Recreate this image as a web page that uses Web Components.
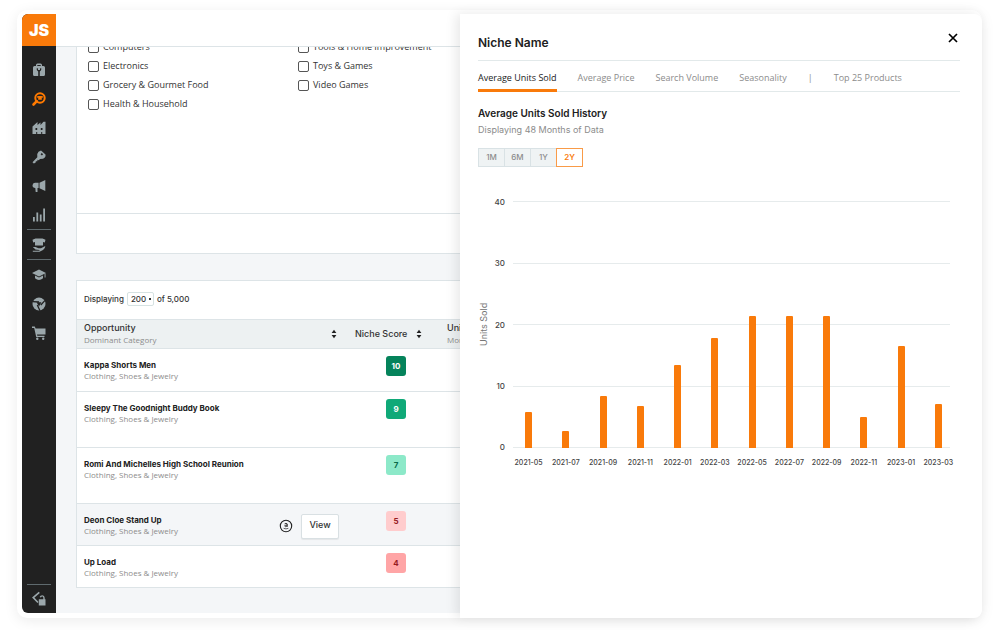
<!DOCTYPE html>
<html lang="en">
<head>
<meta charset="utf-8">
<title>Niche research</title>
<style>
  html { height: 100%; }
  body {
    margin: 0;
    min-height: 100%;
    display: flex;
    background: #fff;
    font: 500 9px/12px Inter, "Open Sans", sans-serif;
    color: #333;
  }
</style>
</head>
<body>
<research-app></research-app>

<script>
const define = (name, html, setup) => {
  const template = document.createElement('template');
  template.innerHTML = `<style>
    *, *::before, *::after { box-sizing: border-box; }
    button, input, select { font: inherit; color: inherit; margin: 0; }
    button { cursor: pointer; }
  </style>` + html;
  customElements.define(name, class extends HTMLElement {
    constructor() {
      super();
      this.attachShadow({ mode: 'open' }).append(template.content.cloneNode(true));
    }
    connectedCallback() {
      if (setup && !this.ready) { this.ready = true; setup(this, this.shadowRoot); }
    }
  });
};

/* ---------- icons ---------- */
const ICONS = {
  toolbox: '<path fill-rule="evenodd" d="M4 3V2Q4 .5 5.500 .5H8.500Q10 .5 10 2V3H11.500Q13 3 13 4.500V11.500Q13 13 11.500 13H2.500Q1 13 1 11.500V4.500Q1 3 2.500 3ZM5.300 3H8.700V2H5.300ZM4.600 5.500Q4.500 7.600 6.200 8.500V13H7.800V8.500Q9.500 7.600 9.400 5.500L8 5.200V7H6V5.200Z"/>',
  search: '<circle cx="8" cy="6" r="4.700" fill="none" stroke="currentColor" stroke-width="2"/><path d="M4.800 9.200 1.500 12.500" stroke="currentColor" stroke-width="2.600" stroke-linecap="round"/><path d="M4.800 4.600 6.500 4H9.500L11.200 4.600 10.800 5.800 9.800 5.600V7.800H6.200V5.600L5.200 5.800Z"/>',
  rank: '<path fill-rule="evenodd" d="M.5 5.500 5.500 1V4L8.500 1.500V4L11.500 .8H13.500V13H.5ZM3.500 7V9H5.200V7ZM8.800 7V9H10.500V7ZM4.200 11V13H5.200V11ZM9.200 11V13H10.200V11Z"/>',
  key: '<path fill-rule="evenodd" d="M9 .5 13.500 4.500Q14 7.500 11 8.800L8 9 6.800 10.200 5.500 9.800 5.300 11.300 3.900 11.300 3.500 12.800 1.800 13.500.5 12.300 5.300 7.200Q4.600 3.500 6.500 1.700ZM9.800 3 8.600 4.200 9.900 5.500 11.100 4.300Z"/>',
  megaphone: '<path d="M13.300 1V12L7.500 9.300V3.700ZM6.600 3.800V9H5.500V13H3.700L3.300 9Q.5 8.800.5 6.400T3 3.800Z"/>',
  chart: '<path d="M1 9H2.800V13.500H1ZM4.400 4.500H6.200V13.500H4.400ZM7.800 6.500H9.600V13.500H7.800ZM11.200 .5H13V13.500H11.200Z"/>',
  source: '<path d="M3.500 .5H10.500L13.500 1.800 12.800 4.500 11 4V7.500H3V4L1.200 4.500.5 1.800Z"/><path d="M.8 9H3.500L6.500 10.300H9L13.300 8Q13.500 10 11 12L7.500 13.700H.8V12.700H7.500V11.900L3.500 11.500Z"/>',
  academy: '<path d="M7 1.500 14 5 7 8.500 0 5ZM3 7.400 7 9.400 11 7.400V10.200Q7 13.600 3 10.200ZM12.600 6 13.500 5.600V9.500H12.600Z"/>',
  circle: '<circle cx="7" cy="7" r="6.500"/><g stroke="#212121" stroke-width="1.300"><path d="M7 5 .5 4.600M8.800 8 12.800 3.600M5.300 8 8 13.800"/></g><path d="M4.600 5.300H9.400L7 9.600Z" fill="#212121"/>',
  cart: '<path d="M0 .5H2.800L3.600 2.500H13.500V8.500H5L5.300 9.800H12.500V11H4.200L2.200 1.900H0Z"/><circle cx="5.300" cy="12.700" r="1.200"/><circle cx="11.200" cy="12.700" r="1.200"/>',
  unlock: '<path d="M7.300 .3 1.200 5.600 6 10.500" fill="none" stroke="currentColor" stroke-width="1.600"/><path d="M6.800 7.300H13.500V13.500H6.800Z"/><path d="M8.300 5.300Q8.700 3.900 10.300 3.900T12 5.800V8" fill="none" stroke="currentColor" stroke-width="1.400"/>',
  close: '<path d="M3 3 11 11M11 3 3 11" stroke="currentColor" stroke-width="1.700"/>',
  sort: '<path d="M7 2 9.800 5.800H4.200ZM7 12 4.200 8.200H9.800Z"/>',
  amazon: '<circle cx="7" cy="7" r="5.700" fill="none" stroke="currentColor" stroke-width="1.100"/><path d="M5.600 4.900Q7 3.700 8.200 4.900V7.900M8.200 6Q5.600 5.900 5.700 7.100T8.200 6.900" fill="none" stroke="currentColor" stroke-width=".9"/><path d="M4.600 9.300Q7 10.500 9.400 9.300" fill="none" stroke="currentColor" stroke-width=".7"/>'
};
define('app-icon', `<style>
  :host { display: block; width: 14px; height: 14px; flex: none; }
  svg { display: block; width: 100%; height: 100%; overflow: visible; }
</style><svg viewBox="0 0 14 14" fill="currentColor" aria-hidden="true"></svg>`,
(el, root) => { root.querySelector('svg').innerHTML = ICONS[el.getAttribute('name')]; });

/* ---------- sidebar ---------- */
define('side-bar', `<style>
  :host { display: flex; flex-direction: column; width: 34px; background: #212121; color: #9ba7ab;
    border-radius: 6px 0 0 6px; overflow: hidden; }
  .logo { display: grid; place-items: center; height: 32px; background: #f97a0a; color: #fff;
    font: 900 16px/20px Inter, sans-serif; text-decoration: none; }
  nav { flex: 1; display: flex; flex-direction: column; align-items: stretch; padding: 9px 5px 0; }
  nav a { display: grid; place-items: center; height: 29px; color: inherit; }
  nav a[aria-current] { color: #ff7a00; }
  nav .ruled { border: solid #5f6a6e; border-width: 1px 0; height: 31px; }
  nav .last { margin-top: auto; border-top: 1px solid #5f6a6e; }
</style>
<a class="logo" href="#home">JS</a>
<nav aria-label="Main">
  <a href="#tools" aria-label="Tools"><app-icon name="toolbox"></app-icon></a>
  <a href="#opportunities" aria-label="Opportunity finder" aria-current="page"><app-icon name="search"></app-icon></a>
  <a href="#rank" aria-label="Products"><app-icon name="rank"></app-icon></a>
  <a href="#keywords" aria-label="Keywords"><app-icon name="key"></app-icon></a>
  <a href="#promotions" aria-label="Promotions"><app-icon name="megaphone"></app-icon></a>
  <a href="#sales" aria-label="Sales"><app-icon name="chart"></app-icon></a>
  <a class="ruled" href="#suppliers" aria-label="Suppliers"><app-icon name="source"></app-icon></a>
  <a href="#academy" aria-label="Academy"><app-icon name="academy"></app-icon></a>
  <a href="#extension" aria-label="Extension"><app-icon name="circle"></app-icon></a>
  <a href="#market" aria-label="Market"><app-icon name="cart"></app-icon></a>
  <a class="last" href="#collapse" aria-label="Unlock menu"><app-icon name="unlock"></app-icon></a>
</nav>`);

/* ---------- category filters ---------- */
define('check-option', `<style>
  :host { display: block; }
  label { display: flex; align-items: center; gap: 4px; height: 18px; white-space: nowrap; font-family: "Open Sans", Inter, sans-serif; font-weight: 500; }
  input { appearance: none; width: 11px; height: 11px; border: 1px solid #555; border-radius: 2px; background: #fff; }
  input:checked { background: #f97a0a; }
</style><label><input type="checkbox"><span><slot></slot></span></label>`);

define('category-filters', `<style>
  :host { display: flex; flex-direction: column; background: #fff; border: solid #dde4e7; border-width: 0 0 1px 1px; }
  .options { display: grid; grid-template-columns: 210px auto; justify-content: start; align-content: end;
    height: 66px; padding-left: 11px; overflow: hidden; }
  .options div { display: grid; row-gap: 1px; align-content: start; }
  footer { margin-top: auto; height: 40px; border-top: 1px solid #dde4e7; }
</style>
<div class="options">
  <div><check-option>Computers</check-option><check-option>Electronics</check-option><check-option>Grocery &amp; Gourmet Food</check-option><check-option>Health &amp; Household</check-option></div>
  <div><check-option>Tools &amp; Home Improvement</check-option><check-option>Toys &amp; Games</check-option><check-option>Video Games</check-option></div>
</div>
<footer></footer>`);

/* ---------- results ---------- */
define('score-badge', `<style>
  :host { display: grid; place-items: center; width: 20px; height: 20px; border-radius: 3px; font-weight: 700; font-size: 8px; }
  :host([tone="best"]) { background: #05835b; color: #fff; }
  :host([tone="good"]) { background: #10a978; color: #fff; }
  :host([tone="fair"]) { background: #8de9c9; color: #0a6b4b; }
  :host([tone="poor"]) { background: #ffcccd; color: #961b1f; }
  :host([tone="bad"]) { background: #ffa5a6; color: #961b1f; }
</style><span><slot></slot></span>`);

define('result-table', `<style>
  :host { display: block; background: #fff; border: 1px solid #dde4e7; border-right: 0; overflow: hidden; }
  .bar { display: flex; align-items: center; gap: 3px; height: 38px; padding: 0 0 2px 7px; font-size: 8px; font-weight: 500; }
  select { appearance: none; height: 14px; width: 27px; padding: 0 0 0 3px; line-height: 12px; border: 1px solid #d6e2e2; border-radius: 2px;
    background: radial-gradient(circle at 22px 6px, #333 1px, transparent 1px) #fff; }
  table { width: 100%; min-width: 480px; border-collapse: collapse; table-layout: fixed; }
  th, td { padding: 0; text-align: left; font-weight: 500; vertical-align: top; }
  tr { border-top: 1px solid #dde4e7; }
  thead tr { background: #edf1f2; height: 29px; }
  th { vertical-align: middle; white-space: nowrap; }
  th div { display: flex; align-items: center; justify-content: space-between; }
  th.name div { padding: 0 4px 0 7px; }
  th.score div { padding: 0 12px 0 11px; }
  th.units div { padding-left: 10px; }
  app-icon { width: 12px; height: 12px; color: #212121; }
  small { display: block; font: 400 8px/11px "Open Sans", Inter, sans-serif; color: #8c8c8c; }
  strong { display: block; font-weight: 700; font-size: 8px; color: #212121; line-height: 12px; }
  td small { line-height: 10px; }
  td { height: 42px; }
  tbody tr:first-child td { height: 43px; }
  tr.tall td { height: 56px; }
  tr.hover { background: #f4f6f8; }
  .cell { display: flex; justify-content: space-between; align-items: flex-start; padding: 10px 5px 0 7px; }
  .cell div { white-space: nowrap; }
  .actions { display: flex; align-items: center; gap: 8px; }
  .actions app-icon { width: 14px; height: 14px; }
  .actions button { width: 38px; height: 25px; padding: 0 0 2px; background: #fff; border: 1px solid #d9e0e3; border-radius: 2px; box-shadow: 0 1px 1px #0001; }
  score-badge { margin: 7px 0 0 42px; }
</style>
<div class="bar"><label for="size">Displaying</label>
  <select id="size"><option>200</option><option>100</option></select><span>of 5,000</span></div>
<table>
  <colgroup><col style="width:267px"><col style="width:93px"><col></colgroup>
  <thead><tr>
    <th class="name"><div><span>Opportunity<small>Dominant Category</small></span><app-icon name="sort"></app-icon></div></th>
    <th class="score"><div><span>Niche Score</span><app-icon name="sort"></app-icon></div></th>
    <th class="units"><div><span>Units Sold<small>Monthly</small></span></div></th>
  </tr></thead>
  <tbody></tbody>
</table>`, (el, root) => {
  const rows = [
    ['Kappa Shorts Men', 10, 'best', ''],
    ['Sleepy The Goodnight Buddy Book', 9, 'good', 'tall'],
    ['Romi And Michelles High School Reunion', 7, 'fair', 'tall'],
    ['Deon Cloe Stand Up', 5, 'poor', 'hover'],
    ['Up Load', 4, 'bad', '']
  ];
  root.querySelector('tbody').innerHTML = rows.map(([name, score, tone, kind]) => `
    <tr class="${kind}"><td><div class="cell"><div><strong>${name}</strong><small>Clothing, Shoes &amp; Jewelry</small></div>
    ${kind === 'hover' ? '<div class="actions"><app-icon name="amazon"></app-icon><button type="button">View</button></div>' : ''}</div></td>
    <td><score-badge tone="${tone}">${score}</score-badge></td><td></td></tr>`).join('');
});

/* ---------- chart ---------- */
define('bar-chart', `<style>
  :host { display: grid; grid-template-columns: 11px 16px minmax(0, 1fr); column-gap: 0; }
  .axis { writing-mode: vertical-rl; transform: rotate(180deg); text-align: center; font-weight: 400; line-height: 11px; color: #777; }
  .ticks, .lines { display: flex; flex-direction: column; justify-content: space-between; }
  .ticks { margin: -5px 0; text-align: right; font-size: 8px; font-weight: 500; line-height: 12px; color: #444; }
  .plot { display: grid; height: 247px; padding-left: 5px; }
  .lines, .bars { grid-area: 1 / 1; }
  .lines { margin: 0 7px 0 3px; }
  .lines i { height: 1px; background: #e6ebec; }
  .bars, .dates { display: grid; grid-template-columns: repeat(12, minmax(0, 1fr)); justify-items: center; }
  .bars { align-items: end; }
  .bars i { width: 7px; background: #f97a0a; border-radius: 1px 1px 0 0; }
  .dates { grid-column: 3; padding: 9px 0 0 5px; font-size: 7px; font-weight: 500; color: #444; white-space: nowrap; }
</style>
<div class="axis">Units Sold</div>
<div class="ticks"><span>40</span><span>30</span><span>20</span><span>10</span><span>0</span></div>
<div class="plot"><div class="lines"><i></i><i></i><i></i><i></i><i></i></div><div class="bars"></div></div>
<div class="dates"></div>`, (el, root) => {
  const data = { '2021-05': 5.8, '2021-07': 2.8, '2021-09': 8.4, '2021-11': 6.8, '2022-01': 13.4, '2022-03': 17.8,
    '2022-05': 21.3, '2022-07': 21.3, '2022-09': 21.3, '2022-11': 5, '2023-01': 16.6, '2023-03': 7.2 };
  root.querySelector('.bars').innerHTML = Object.values(data).map(v => `<i style="height:${v / 40 * 100}%"></i>`).join('');
  root.querySelector('.dates').innerHTML = Object.keys(data).map(d => `<span>${d}</span>`).join('');
});

/* ---------- drawer ---------- */
define('niche-drawer', `<style>
  :host { display: block; background: #fff; padding: 1px 22px 0 18px; box-shadow: -4px 0 12px #00000017; border-radius: 0 8px 8px 0; position: relative; }
  header { display: flex; justify-content: space-between; align-items: center; height: 46px; padding-top: 10px; border-bottom: 1px solid #e2e9ea; }
  h2, h3, p { margin: 0; }
  h2 { font-size: 12px; line-height: 16px; font-weight: 600; color: #212121; }
  header button { padding: 0; border: 0; background: none; color: #000; margin-bottom: 10px; }
  .tabs { display: flex; gap: 21px; height: 31px; align-items: stretch; border-bottom: 1px solid #e2e9ea; color: #8c8c8c;
    font-family: "Open Sans", Inter, sans-serif; font-weight: 500; }
  .tabs a, .tabs span { display: flex; align-items: center; padding-top: 5px; margin-bottom: -1px; color: inherit; text-decoration: none; white-space: nowrap;
    border-bottom: 3px solid transparent; }
  .tabs a[aria-current] { color: #212121; border-color: #f97a0a; }
  h3 { margin-top: 14px; font-size: 10px; line-height: 14px; font-weight: 600; color: #212121; }
  p { margin-top: 4px; color: #8c8c8c; font-weight: 400; }
  .ranges { display: flex; margin: 12px 0 34px; }
  .ranges button { width: 27px; height: 19px; padding: 0 0 1px; margin-right: -1px; border: 1px solid #d9e2e5; background: #eff3f4; color: #8c8c8c; font-size: 8px; }
  .ranges button[aria-pressed="true"] { background: #fff; border-color: #f99b48; color: #f97a0a; font-weight: 600; }
  bar-chart { margin-right: 3px; }
</style>
<header><h2>Niche Name</h2><button type="button" aria-label="Close"><app-icon name="close"></app-icon></button></header>
<nav class="tabs" aria-label="Niche data">
  <a href="#units" aria-current="true">Average Units Sold</a><a href="#price">Average Price</a><a href="#volume">Search Volume</a><a href="#season">Seasonality</a><span>|</span><a href="#top">Top 25 Products</a>
</nav>
<h3>Average Units Sold History</h3>
<p>Displaying 48 Months of Data</p>
<div class="ranges" role="group" aria-label="Range">
  <button type="button" aria-pressed="false">1M</button><button type="button" aria-pressed="false">6M</button><button type="button" aria-pressed="false">1Y</button><button type="button" aria-pressed="true">2Y</button>
</div>
<bar-chart></bar-chart>`);

/* ---------- page ---------- */
define('research-app', `<style>
  :host { flex: 1; min-width: 0; display: grid; grid-template-columns: 34px minmax(0, 202fr) minmax(0, 261fr); grid-template-rows: minmax(0, 1fr);
    margin: 10px 18px 12px 17px; padding: 4px 0 0 5px; background: #fff; border-radius: 10px; box-shadow: 0 3px 14px #00000014; }
  side-bar { margin-bottom: 5px; }
  main { display: flex; flex-direction: column; margin-bottom: 5px; background: #f4f6f8; overflow: hidden; }
  .top { height: 33px; flex: none; background: #fff; border-bottom: 1px solid #dde4e7; }
  .body { flex: 1; display: flex; flex-direction: column; gap: 26px; padding: 0 0 25px 20px; }
  category-filters { flex: 1; }
</style>
<side-bar></side-bar>
<main><div class="top"></div><div class="body"><category-filters></category-filters><result-table></result-table></div></main>
<niche-drawer></niche-drawer>`);
</script>
</body>
</html>
